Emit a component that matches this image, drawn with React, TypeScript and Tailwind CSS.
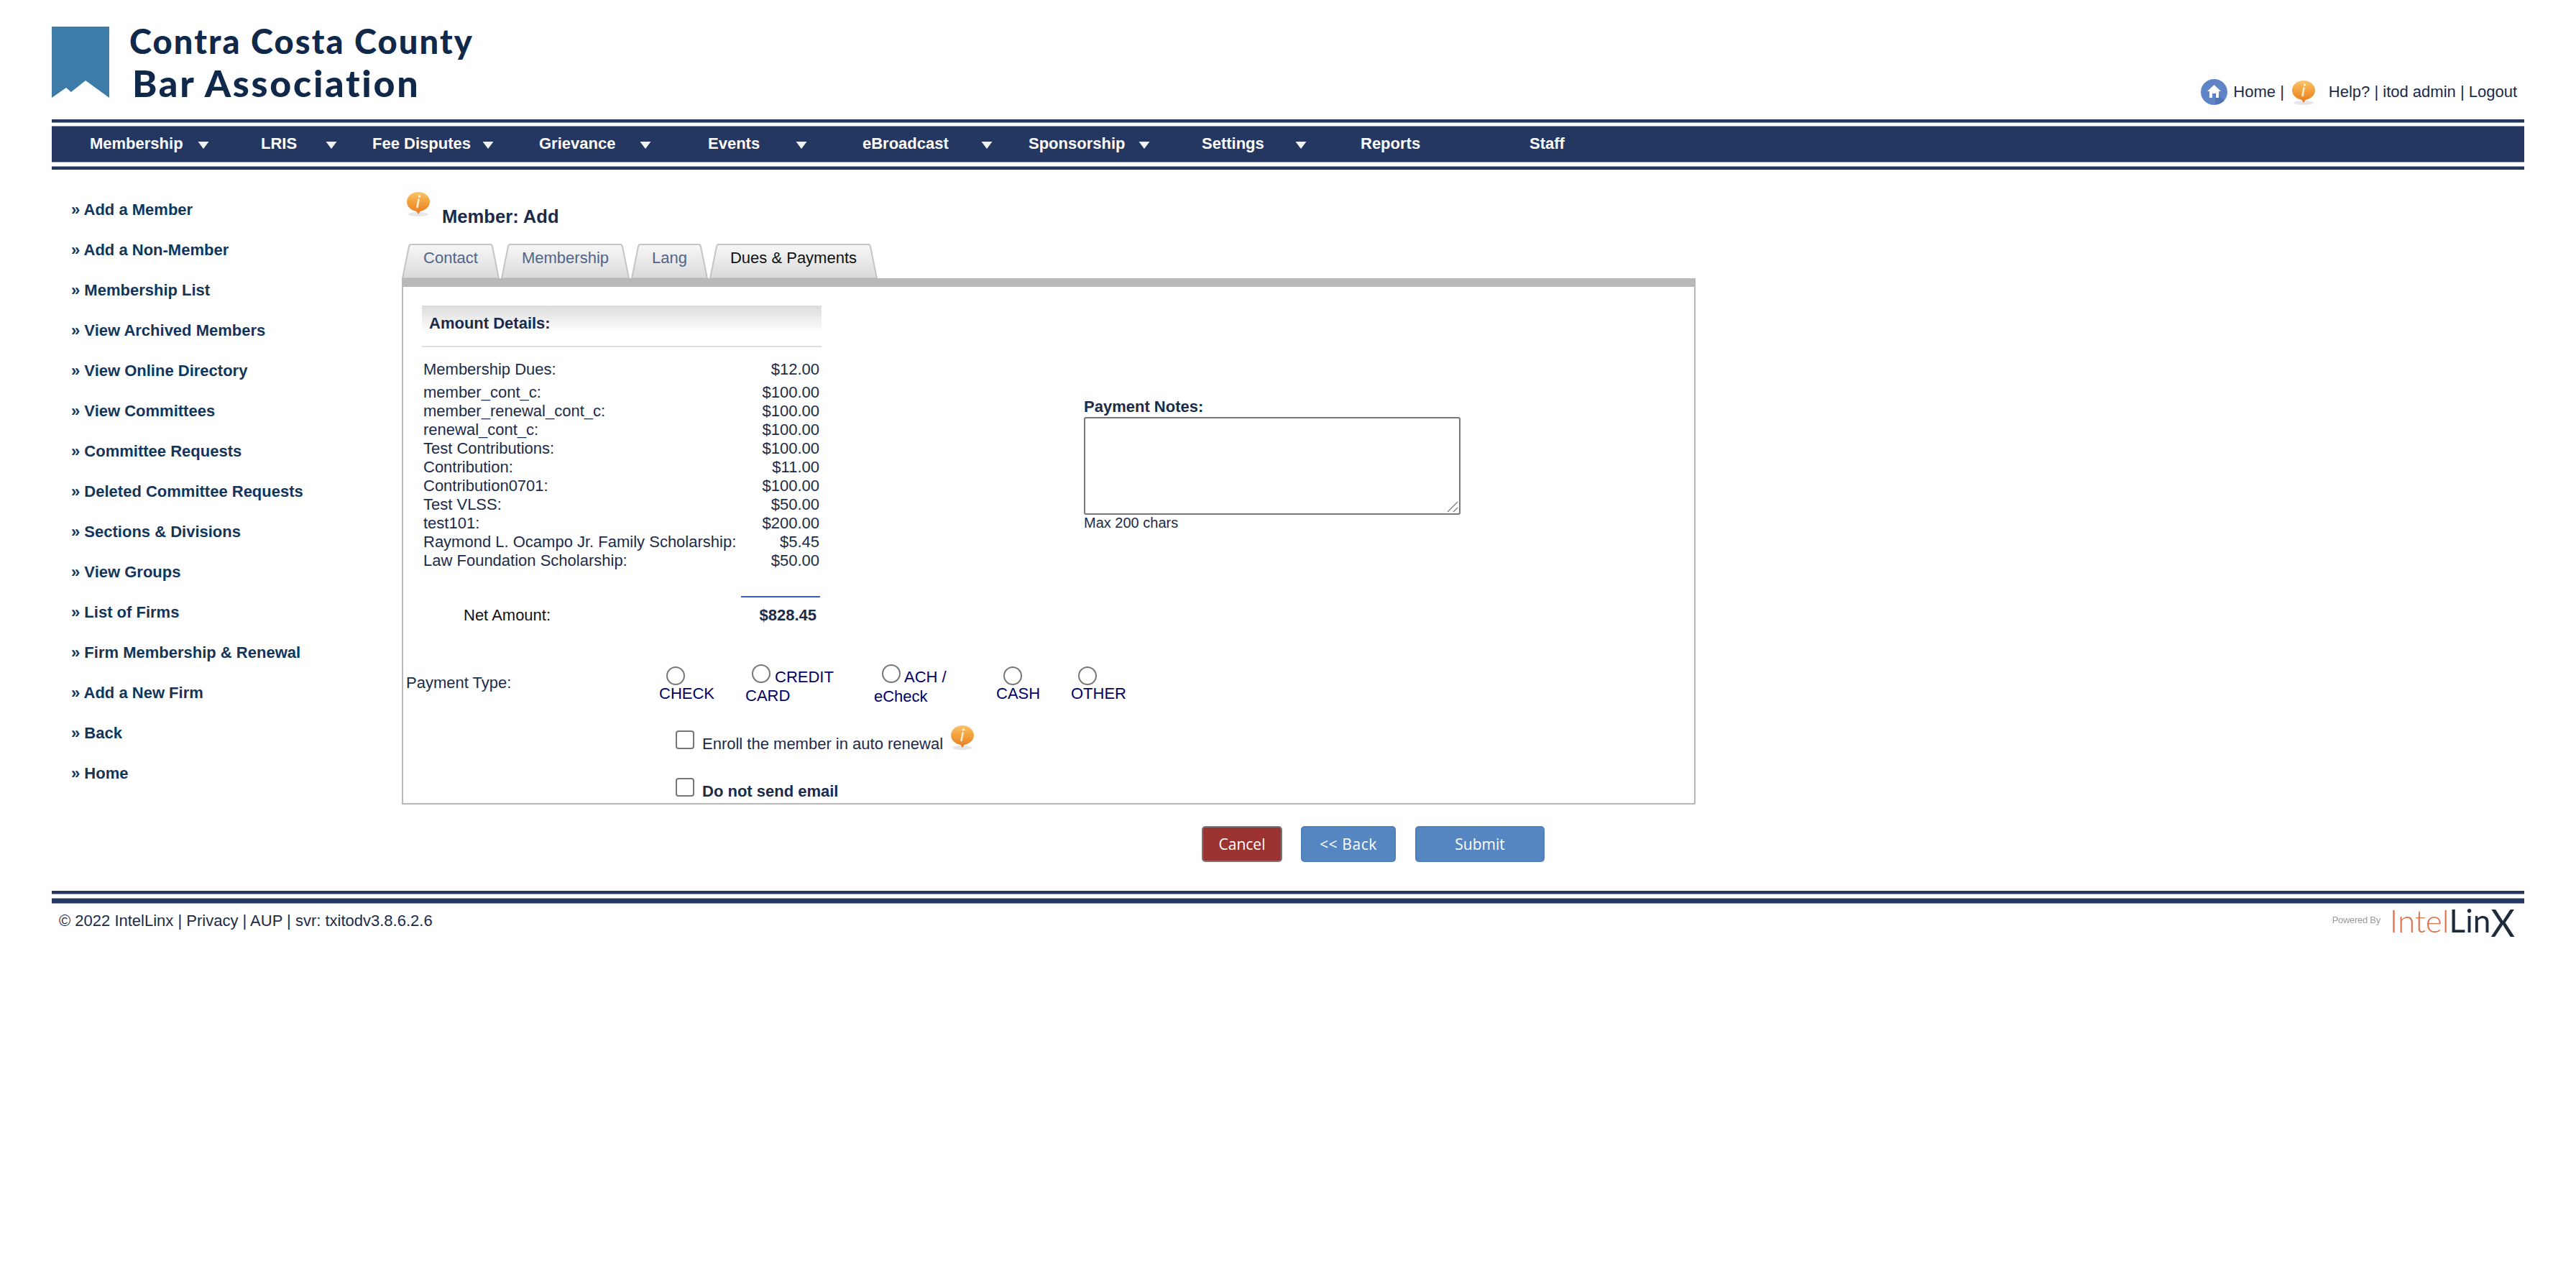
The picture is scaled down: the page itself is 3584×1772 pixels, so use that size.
import React from "react";

const F = "[font-family:'Liberation_Sans',Arial,sans-serif]";

function InfoIcon({ id }: { id: string }) {
  return (
    <svg width="34" height="34" viewBox="0 0 34 34" className="shrink-0 block">
      <defs>
        <linearGradient id={id} x1="0" y1="0" x2="0" y2="1">
          <stop offset="0" stopColor="#f9c56c" />
          <stop offset="0.5" stopColor="#f3a23e" />
          <stop offset="1" stopColor="#e8842a" />
        </linearGradient>
      </defs>
      <ellipse cx="17" cy="31" rx="14" ry="3" fill="#e6e6e6" />
      <ellipse cx="17" cy="13.5" rx="16" ry="13.5" fill={`url(#${id})`} />
      <path d="M13 25 L17 31 L21 25 Z" fill="#e8842a" />
      <circle cx="18.5" cy="6" r="1.8" fill="#fdeed2" />
      <path d="M17.5 10.5 L15.5 21" stroke="#fdeed2" strokeWidth="2.6" strokeLinecap="round" />
    </svg>
  );
}

function HomeIcon() {
  return (
    <svg width="37" height="36" viewBox="0 0 37 36" className="shrink-0 block">
      <ellipse cx="18.5" cy="18" rx="18.5" ry="18" fill="#5f84c8" />
      <path d="M20 19 L33 30 A18 18 0 0 1 20 35 Z" fill="#4a68a8" opacity="0.6" />
      <path d="M18.5 8 L28 17 L25 17 L25 26 L21 26 L21 20 L16 20 L16 26 L12 26 L12 17 L9 17 Z" fill="#ffffff" />
    </svg>
  );
}

const navItems = [
  { label: "Membership", w: "w-[238px]", arrow: "w-[150px]" },
  { label: "LRIS", w: "w-[155px]", arrow: "w-[90px]" },
  { label: "Fee Disputes", w: "w-[232px]", arrow: "w-[153px]" },
  { label: "Grievance", w: "w-[235px]", arrow: "w-[140px]" },
  { label: "Events", w: "w-[215px]", arrow: "w-[122px]" },
  { label: "eBroadcast", w: "w-[231px]", arrow: "w-[165px]" },
  { label: "Sponsorship", w: "w-[241px]", arrow: "w-[153px]" },
  { label: "Settings", w: "w-[221px]", arrow: "w-[130px]" },
  { label: "Reports", w: "w-[235px]", arrow: "" },
  { label: "Staff", w: "w-[100px]", arrow: "" },
];

const sideItems = [
  "Add a Member",
  "Add a Non-Member",
  "Membership List",
  "View Archived Members",
  "View Online Directory",
  "View Committees",
  "Committee Requests",
  "Deleted Committee Requests",
  "Sections & Divisions",
  "View Groups",
  "List of Firms",
  "Firm Membership & Renewal",
  "Add a New Firm",
  "Back",
  "Home",
];

const rows = [
  ["member_cont_c:", "$100.00"],
  ["member_renewal_cont_c:", "$100.00"],
  ["renewal_cont_c:", "$100.00"],
  ["Test Contributions:", "$100.00"],
  ["Contribution:", "$11.00"],
  ["Contribution0701:", "$100.00"],
  ["Test VLSS:", "$50.00"],
  ["test101:", "$200.00"],
  ["Raymond L. Ocampo Jr. Family Scholarship:", "$5.45"],
  ["Law Foundation Scholarship:", "$50.00"],
];

const tabs = [
  { label: "Contact", w: "w-[136px]", px: 136, active: false },
  { label: "Membership", w: "w-[179px]", px: 179, active: false },
  { label: "Lang", w: "w-[107px]", px: 107, active: false },
  { label: "Dues & Payments", w: "w-[234px]", px: 234, active: true },
];

function Tab({ label, w, px, active, id }: { label: string; w: string; px: number; active: boolean; id: string }) {
  return (
    <div className={`relative h-[48px] ${w} flex justify-center pt-[7px] leading-[26px] ${active ? "text-[#111111]" : "text-[#50658a]"}`}>
      <svg className="absolute inset-0 h-full w-full" viewBox={`0 0 ${px} 48`}>
        <defs>
          <linearGradient id={id} x1="0" y1="0" x2="0" y2="1">
            <stop offset="0" stopColor="#f7f7f7" />
            <stop offset="1" stopColor="#dadada" />
          </linearGradient>
        </defs>
        <path
          d={`M1 48 L10 4 Q10.5 1 13 1 L${px - 13} 1 Q${px - 10.5} 1 ${px - 10} 4 L${px - 1} 48 Z`}
          fill={`url(#${id})`}
          stroke="#c4c4c4"
          strokeWidth="2"
        />
      </svg>
      <span className="relative">{label}</span>
    </div>
  );
}

const radio = "block h-[26px] w-[26px] shrink-0 appearance-none rounded-full border-2 border-[#767676] bg-white";
const check = "block h-[26px] w-[26px] shrink-0 appearance-none rounded-[4px] border-2 border-[#767676] bg-white";

export default function App() {
  return (
    <div className={`${F} min-h-[1772px] bg-white px-[72px] text-[22px] leading-[26px] text-[#1b2b4a]`}>
      {/* header */}
      <header className="relative flex h-[166px] items-start justify-between">
        <div className="mt-[37px] flex">
          <svg width="80" height="99" viewBox="0 0 80 99" className="block shrink-0">
            <polygon points="0,0 80,0 80,99 47,75 27,91 20,85 0,99" fill="#3d7ba8" />
          </svg>
          <div className="ml-[28px] font-['Lato',sans-serif] font-black text-[#10294a]">
            <div className="-mt-[9px] h-[58px] whitespace-nowrap text-[47px] leading-[58px] tracking-[2.1px]">Contra Costa County</div>
            <div className="ml-[4px] -mt-[1px] whitespace-nowrap text-[52px] leading-[60px] tracking-[2.7px]">Bar Association</div>
          </div>
        </div>
        <div className="mr-[10px] mt-[110px] flex items-start">
          <HomeIcon />
          <span className="ml-[8px] mt-[5px]">Home |</span>
          <div className="ml-[10px] mt-[2px]">
            <InfoIcon id="gi1" />
          </div>
          <span className="ml-[18px] mt-[5px]">Help? | itod admin | Logout</span>
        </div>
      </header>

      {/* nav */}
      <div className="h-[4px] bg-[#243760]" />
      <div className="h-[6px] bg-white [border-top:1px_solid_#8f9ab0] [border-bottom:1px_solid_#8f9ab0]" />
      <nav className="flex h-[49px] items-center bg-[#243760] pl-[53px] font-bold text-white">
        {navItems.map((n) => (
          <div key={n.label} className={`flex shrink-0 items-center pb-[2px] ${n.w}`}>
            <span className={`block whitespace-nowrap ${n.arrow}`}>{n.label}</span>
            {n.arrow ? (
              <svg width="16" height="10" viewBox="0 0 16 10" className="mt-[4px] block">
                <polygon points="0.5,0 15.5,0 8,10" fill="#f2f2f2" />
              </svg>
            ) : null}
          </div>
        ))}
      </nav>
      <div className="h-[7px] bg-white [border-top:1px_solid_#8f9ab0] [border-bottom:1px_solid_#8f9ab0]" />
      <div className="h-[4px] bg-[#243760]" />

      {/* body */}
      <div className="flex">
        <aside className="flex w-[487px] shrink-0 flex-col gap-[30px] pl-[27px] pt-[43px] font-bold text-[#12355b]">
          {sideItems.map((s) => (
            <div key={s} className="h-[26px] whitespace-nowrap">
              » {s}
            </div>
          ))}
        </aside>

        <main className="w-[1800px] shrink-0 pt-[31px]">
          <div className="flex h-[49px] pl-[6px]">
            <InfoIcon id="gi2" />
            <h1 className="ml-[16px] mt-[19px] text-[25.6px] font-bold leading-[30px]">Member: Add</h1>
          </div>

          <div className="mt-[23px] flex gap-[2px]">
            {tabs.map((t, i) => (
              <Tab key={t.label} {...t} id={`tab${i}`} />
            ))}
          </div>

          <section className="h-[732px] border-x-2 border-b-2 border-t-[12px] border-[#b8b8b8]">
            <div className="flex">
              <div className="w-[947px] shrink-0 pl-[26px] pt-[26px]">
                <div className="h-[58px] w-[556px] border-b-2 border-[#dddddd] bg-[linear-gradient(to_bottom,#dcdcdc,#ffffff_68%)] pl-[10px] pt-[12px] font-bold">
                  Amount Details:
                </div>
                <div className="mt-[18px] flex w-[555px] justify-between px-[2px]">
                  <span>Membership Dues:</span>
                  <span>$12.00</span>
                </div>
                <div className="mt-[6px] w-[555px] px-[2px]">
                  {rows.map(([a, b]) => (
                    <div key={a} className="flex justify-between whitespace-nowrap">
                      <span>{a}</span>
                      <span>{b}</span>
                    </div>
                  ))}
                </div>
                <div className="ml-[444px] mt-[36px] h-[2px] w-[110px] bg-[#3a5bd9]" />
                <div className="mt-[12px] flex w-[553px] justify-between pl-[58px] pr-[4px]">
                  <span className="text-[#111111]">Net Amount:</span>
                  <span className="font-bold">$828.45</span>
                </div>
              </div>
              <div className="w-[524px] pt-[154px]">
                <div className="font-bold">Payment Notes:</div>
                <div className="relative mt-px h-[136px] w-[524px]">
                  <textarea className="block h-full w-full resize-none rounded-[3px] border-2 border-[#767676] bg-white" />
                  <svg width="16" height="16" viewBox="0 0 16 16" className="absolute bottom-[3px] right-[3px] block">
                    <path d="M1 15 L15 1 M9 15 L15 9" stroke="#777777" strokeWidth="1.2" />
                  </svg>
                </div>
                <div className="mt-[-1px] text-[20px] leading-[24px]">Max 200 chars</div>
              </div>
            </div>

            {/* payment type */}
            <div className="mt-[55px] flex h-[57px] pl-[4px] text-[#000066]">
              <div className="w-[352px] shrink-0 pt-[13px] text-[#1b2b4a]">Payment Type:</div>
              <div className="w-[120px] shrink-0">
                <input type="radio" name="p" className={`${radio} ml-[10px] mt-[3px]`} />
                <div className="-mt-[1px]">CHECK</div>
              </div>
              <div className="w-[179px] shrink-0">
                <div className="flex">
                  <input type="radio" name="p" className={`${radio} ml-[9px]`} />
                  <span className="ml-[6px] mt-[5px]">CREDIT</span>
                </div>
                <div>CARD</div>
              </div>
              <div className="w-[170px] shrink-0">
                <div className="flex">
                  <input type="radio" name="p" className={`${radio} ml-[11px]`} />
                  <span className="ml-[5px] mt-[5px]">ACH /</span>
                </div>
                <div className="mt-[1px]">eCheck</div>
              </div>
              <div className="w-[104px] shrink-0">
                <input type="radio" name="p" className={`${radio} ml-[10px] mt-[3px]`} />
                <div className="-mt-[1px]">CASH</div>
              </div>
              <div className="shrink-0">
                <input type="radio" name="p" className={`${radio} ml-[10px] mt-[3px]`} />
                <div className="-mt-[1px]">OTHER</div>
              </div>
            </div>

            <div className="ml-[379px] mt-[28px] flex items-start">
              <input type="checkbox" className={`${check} mt-[7px]`} />
              <span className="ml-[11px] mt-[13px]">Enroll the member in auto renewal</span>
              <div className="ml-[10px]">
                <InfoIcon id="gi3" />
              </div>
            </div>
            <div className="ml-[379px] mt-[-5px] flex items-start">
              <input type="checkbox" className={`${check} mt-[39px]`} />
              <span className="ml-[11px] mt-[45px] font-bold">Do not send email</span>
            </div>
          </section>

          <div className="mt-[30px] flex pl-[1113px] font-['Open_Sans',sans-serif] text-[21px] text-white">
            <button className="flex h-[50px] w-[112px] items-center justify-center rounded-[5px] border-2 border-[#777777] bg-[#9b3431]">Cancel</button>
            <button className="ml-[26px] flex h-[50px] w-[132px] items-center justify-center rounded-[5px] border-2 border-[#4f7fbc] bg-[#5686c1] tracking-[0.6px]">&lt;&lt; Back</button>
            <button className="ml-[27px] flex h-[50px] w-[180px] items-center justify-center rounded-[5px] border-2 border-[#4f7fbc] bg-[#5686c1]">Submit</button>
          </div>
        </main>
      </div>

      {/* footer */}
      <footer className="mt-[40px]">
        <div className="h-[5px] bg-[#243760] [border-bottom:1px_solid_#8f9ab0]" />
        <div className="h-[5px]" />
        <div className="h-[8px] bg-[#243760] [border-top:1px_solid_#8f9ab0] [border-bottom:1px_solid_#8f9ab0]" />
        <div className="flex items-start justify-between">
          <div className="ml-[10px] mt-[11px]">© 2022 IntelLinx | Privacy | AUP | svr: txitodv3.8.6.2.6</div>
          <div className="mr-[13px] mt-[1px] flex h-[44px] items-center blur-[0.6px]">
            <span className="mr-[13px] text-[13px] tracking-[-0.3px] text-[#999999]">Powered By</span>
            <span className="font-['Lato',sans-serif] text-[44px] font-light leading-[44px] text-[#e0704a]">Intel</span>
            <span className="font-['Lato',sans-serif] text-[44px] font-normal leading-[44px] text-[#1e2b3a]">Lin</span>
            <span className="inline-block translate-y-[3px] font-['Lato',sans-serif] text-[52px] font-normal leading-[44px] text-[#1e2b3a]">X</span>
          </div>
        </div>
      </footer>
    </div>
  );
}
